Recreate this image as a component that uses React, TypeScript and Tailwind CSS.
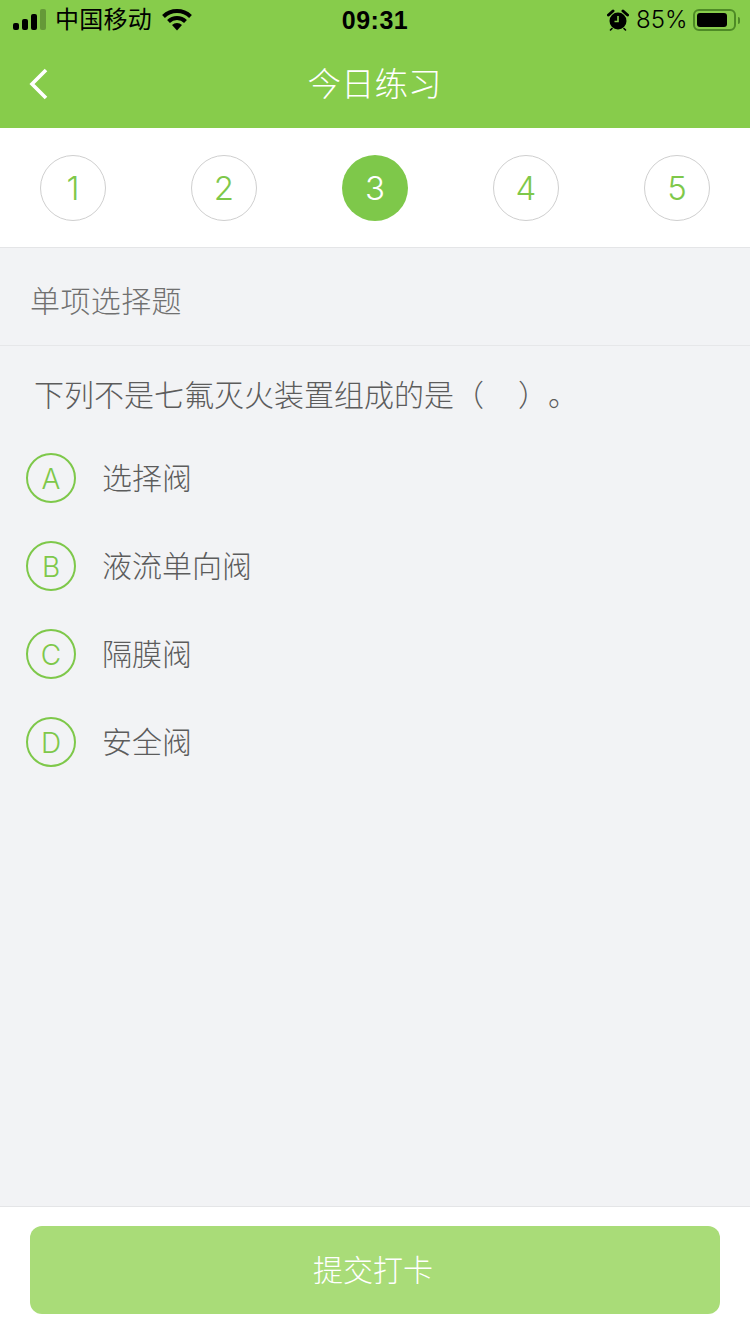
const font = { fontFamily: '"Liberation Sans", "Noto Sans CJK SC", sans-serif' };
const lightFont = { fontFamily: 'Inter, "Liberation Sans", sans-serif' };

const steps = [1, 2, 3, 4, 5];
const options = [
  { key: "A", label: "选择阀" },
  { key: "B", label: "液流单向阀" },
  { key: "C", label: "隔膜阀" },
  { key: "D", label: "安全阀" },
];

function StatusBar() {
  return (
    <div className="h-10 flex items-center justify-between pl-[13px] pr-[10px] text-black relative">
      <div className="flex items-center">
        <svg width="33" height="22" viewBox="0 0 33 22" className="mr-[9px]">
          <rect x="0" y="14" width="6" height="7" rx="2" fill="#000" />
          <rect x="9" y="10" width="6" height="11" rx="2" fill="#000" />
          <rect x="18" y="5" width="6" height="16" rx="2" fill="#000" />
          <rect x="27" y="0" width="6" height="21" rx="2" fill="#000" fillOpacity="0.25" />
        </svg>
        <span className="text-[24px] leading-none tracking-[0.25px]">中国移动</span>
        <svg width="30" height="22" viewBox="0 0 30 22" className="ml-[10px]">
          <path d="M1.5 7.5 A 19.5 19.5 0 0 1 28.5 7.5" fill="none" stroke="#000" strokeWidth="4" />
          <path d="M6.5 12.5 A 12 12 0 0 1 23.5 12.5" fill="none" stroke="#000" strokeWidth="4" />
          <path d="M10 16 A 7.5 7.5 0 0 1 20 16 L15 21.5 Z" fill="#000" />
        </svg>
      </div>
      <span className="absolute left-0 right-0 text-center text-[25px] font-bold leading-none tracking-[0.5px]">
        09:31
      </span>
      <div className="flex items-center">
        <svg width="22" height="22" viewBox="0 0 22 22" className="mr-[7px]">
          <circle cx="11" cy="12" r="8.5" fill="#000" />
          <path d="M11 7 V12.5 H7.5" fill="none" stroke="#87cc4b" strokeWidth="1.6" />
          <path d="M1.5 6 L6 2 M20.5 6 L16 2" stroke="#000" strokeWidth="3" strokeLinecap="round" />
          <path d="M5 19.5 L3.5 21 M17 19.5 L18.5 21" stroke="#000" strokeWidth="1.6" strokeLinecap="round" />
        </svg>
        <span style={lightFont} className="w-[51px] text-[24px] leading-none mr-[6px] font-light whitespace-nowrap">85%</span>
        <div className="w-[43px] h-[22px] rounded-[6px] border-2 border-[#4e8a26] p-[2px]">
          <div className="w-[30px] h-full rounded-[3px] bg-black" />
        </div>
        <div className="w-[2px] h-[7px] ml-[2px] rounded-r-sm bg-[#4e8a26]" />
      </div>
    </div>
  );
}

export default function App() {
  return (
    <div style={font} className="w-[750px] h-[1334px] flex flex-col bg-[#f2f3f5] overflow-hidden">
      <div className="h-32 bg-[#87cc4b] flex flex-col">
        <StatusBar />
        <div className="relative flex-1 flex items-center justify-center">
          <svg width="20" height="32" viewBox="0 0 20 32" className="absolute left-[29px] top-[28px]">
            <path d="M17 2 L3 16 L17 30" fill="none" stroke="#fff" strokeWidth="3.6" />
          </svg>
          <span className="text-[33.5px] leading-none text-white font-light mt-[1px] mr-[1px]">今日练习</span>
        </div>
      </div>

      <div className="h-[120px] bg-white border-b border-[#e4e5e7] flex items-center justify-between px-10">
        {steps.map((n) =>
          n === 3 ? (
            <div key={n} style={lightFont} className="w-[66px] h-[66px] rounded-full bg-[#7ec84a] flex items-center justify-center pt-[2px] text-[33px] font-[350] text-white">
              {n}
            </div>
          ) : (
            <div key={n} style={lightFont} className="w-[66px] h-[66px] rounded-full border border-[#cfcfcf] flex items-center justify-center pt-[2px] text-[33px] font-[350] text-[#7ec84a]">
              {n}
            </div>
          ),
        )}
      </div>

      <div className="h-[98px] border-b border-[#e6e7e9] flex items-center pl-[30px] pt-[10px] text-[30px] tracking-[0.4px] font-light text-[#707070]">
        单项选择题
      </div>

      <div className="pl-[34px] pt-[30px] text-[30px] leading-[40px] font-light text-[#5c5c5c] whitespace-pre [text-spacing-trim:space-all]">
        下列不是七氟灭火装置组成的是（<span className="inline-block w-[34px]" />）。
      </div>

      <div className="pl-[26px] pt-[18px] flex flex-col">
        {options.map((o) => (
          <div key={o.key} className="h-[88px] flex items-center">
            <div style={lightFont} className="w-[50px] h-[50px] rounded-full border-2 border-[#7ec84a] flex items-center justify-center pt-[2px] text-[28px] font-[350] text-[#7ec84a]">
              {o.key}
            </div>
            <span className="ml-[26px] text-[30px] font-light text-[#5c5c5c]">{o.label}</span>
          </div>
        ))}
      </div>

      <div className="mt-auto h-[128px] bg-white border-t border-[#e4e5e7] pt-[19px] px-[30px]">
        <div className="h-[88px] rounded-[12px] bg-[#a9dc78] flex items-center justify-center pr-[4px] text-[30px] font-light text-white">
          提交打卡
        </div>
      </div>
    </div>
  );
}
